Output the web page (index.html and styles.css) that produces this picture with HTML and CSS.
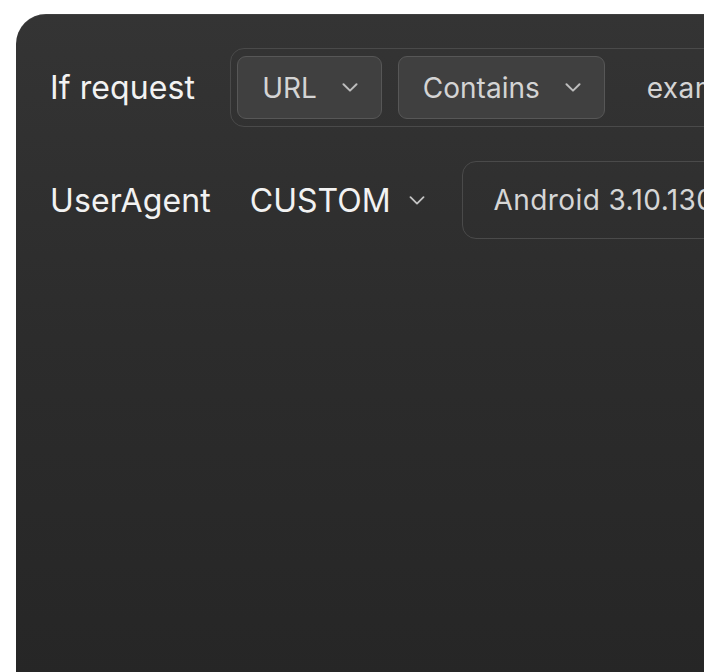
FILE: index.html
```html
<!DOCTYPE html>
<html>
<head>
<meta charset="utf-8">
<link rel="stylesheet" href="styles.css">
</head>
<body>
<div class="card">
  <div class="row row-request">
    <span class="label">If request</span>
    <div class="group">
      <div class="select">
        <span>URL</span>
        <svg class="chev" viewBox="0 0 16 9"><path d="M1.5 1.2 L8 7.6 L14.5 1.2"/></svg>
      </div>
      <div class="select">
        <span>Contains</span>
        <svg class="chev" viewBox="0 0 16 9"><path d="M1.5 1.2 L8 7.6 L14.5 1.2"/></svg>
      </div>
      <div class="group-input">example.com/api/v1/config</div>
    </div>
  </div>
  <div class="row row-agent">
    <span class="label">UserAgent</span>
    <div class="plain-select">
      <span>CUSTOM</span>
      <svg class="chev chev-small" viewBox="0 0 16 9"><path d="M1.5 1.2 L8 7.6 L14.5 1.2"/></svg>
    </div>
    <div class="text-input">Android 3.10.1300 (Linux; U; Android 13)</div>
  </div>
</div>
</body>
</html>
```

FILE: styles.css
```css
html, body {
  margin: 0;
  padding: 0;
  background: #ffffff;
  overflow: hidden;
  width: 704px;
  height: 672px;
}

body {
  font-family: Inter, "Noto Sans", sans-serif;
}

.card {
  margin: 14px 0 0 16px;
  width: 900px;
  height: 720px;
  box-sizing: border-box;
  padding: 34px 0 0 34px;
  border-radius: 30px 0 0 0;
  background: linear-gradient(180deg, #343434 0%, #2c2c2c 45%, #252525 100%);
  box-shadow: inset 0 1px 0 rgba(255, 255, 255, 0.06);
}

.row {
  display: flex;
  align-items: center;
  white-space: nowrap;
}

.row-request {
  height: 79px;
  gap: 35px;
}

.row-agent {
  margin-top: 34px;
  height: 78px;
}

.label {
  font-size: 32px;
  color: #f2f2f2;
  letter-spacing: 0.1px;
}

.group {
  height: 79px;
  box-sizing: border-box;
  display: flex;
  align-items: center;
  gap: 16px;
  padding: 0 6px;
  border: 1.5px solid #4a4a4a;
  border-radius: 14px;
}

.select {
  height: 63px;
  box-sizing: border-box;
  display: flex;
  align-items: center;
  gap: 25px;
  padding: 0 23px 0 24px;
  background: #404040;
  border: 1.5px solid #575757;
  border-radius: 9px;
  font-size: 28px;
  color: #d4d4d4;
  letter-spacing: 0;
}

.chev {
  width: 16px;
  height: 9px;
  fill: none;
  stroke: #bdbdbd;
  stroke-width: 2;
  stroke-linecap: round;
  stroke-linejoin: round;
}

.group-input {
  padding-left: 26px;
  font-size: 28px;
  color: #d4d4d4;
  letter-spacing: 0.4px;
}

.plain-select {
  display: flex;
  align-items: center;
  gap: 18px;
  margin-left: 39px;
  font-size: 32px;
  color: #f2f2f2;
}

.chev-small {
  stroke: #c4c4c4;
  stroke-width: 1.8;
}

.text-input {
  margin-left: 37px;
  height: 78px;
  box-sizing: border-box;
  display: flex;
  align-items: center;
  padding-left: 31px;
  padding-right: 40px;
  border: 1.5px solid #4a4a4a;
  border-radius: 14px;
  font-size: 28px;
  color: #d6d6d6;
  letter-spacing: 0.4px;
}
```
